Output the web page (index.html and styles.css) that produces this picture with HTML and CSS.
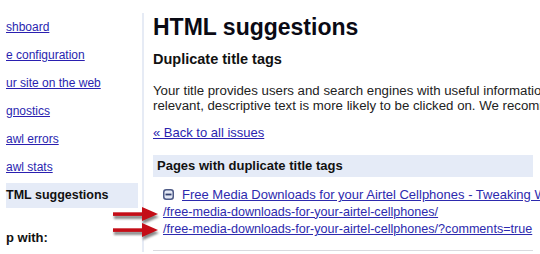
FILE: index.html
```html
<!DOCTYPE html>
<html>
<head>
<meta charset="utf-8">
<link rel="stylesheet" href="styles.css">
</head>
<body>
<div class="page">
  <aside class="sidebar">
    <ul class="nav">
      <li><a href="#">shboard</a></li>
      <li><a href="#">e configuration</a></li>
      <li><a href="#">ur site on the web</a></li>
      <li><a href="#">gnostics</a></li>
      <li><a href="#">awl errors</a></li>
      <li><a href="#">awl stats</a></li>
      <li class="active">TML suggestions</li>
    </ul>
    <div class="help">p with:</div>
  </aside>
  <main class="main">
    <h1 class="title">HTML suggestions</h1>
    <h2 class="subtitle">Duplicate title tags</h2>
    <p class="desc">Your title provides users and search engines with useful information about your site.<br>relevant, descriptive text is more likely to be clicked on. We recommend reviewing</p>
    <a class="back" href="#">« Back to all issues</a>
    <section class="dup">
      <div class="dup-head">Pages with duplicate title tags</div>
      <ul class="dup-list">
        <li class="dup-title">
          <svg class="toggle" width="11" height="11" viewBox="0 0 11 11"><rect x="0.75" y="0.75" width="9.5" height="9.5" rx="2.5" fill="#e4e9f5" stroke="#4d5a86" stroke-width="1.5"/><rect x="2.5" y="4.6" width="6" height="1.8" fill="#33406e"/></svg>
          <a href="#">Free Media Downloads for your Airtel Cellphones - Tweaking Windows</a>
        </li>
        <li class="dup-url"><a href="#">/free-media-downloads-for-your-airtel-cellphones/</a></li>
        <li class="dup-url"><a href="#">/free-media-downloads-for-your-airtel-cellphones/?comments=true</a></li>
      </ul>
    </section>
  </main>
  <svg class="arrow arrow-1" width="46" height="14" viewBox="0 0 46 14"><rect x="0" y="5.3" width="31" height="3.6" fill="#c40d17"/><polygon points="29,0 45,7 29,14" fill="#c40d17"/></svg>
  <svg class="arrow arrow-2" width="46" height="14" viewBox="0 0 46 14"><rect x="0" y="5.3" width="31" height="3.6" fill="#c40d17"/><polygon points="29,0 45,7 29,14" fill="#c40d17"/></svg>
</div>
</body>
</html>
```

FILE: styles.css
```css
html, body {
  margin: 0;
  padding: 0;
  background: #fff;
}
body {
  width: 540px;
  height: 254px;
  overflow: hidden;
  font-family: "Liberation Sans", Arial, sans-serif;
  color: #111;
}
.page {
  position: relative;
  display: flex;
  align-items: flex-start;
  width: 540px;
  height: 254px;
}
.sidebar {
  flex: 0 0 auto;
  box-sizing: border-box;
  width: 144px;
  height: 239px;
  margin-top: 13px;
  padding: 2px 4px 0 6px;
  border-right: 2px solid #e6ebf5;
}
.nav {
  list-style: none;
  margin: 0;
  padding: 0;
}
.nav li {
  height: 25px;
  line-height: 25px;
  margin-bottom: 3px;
  font-size: 12px;
  white-space: nowrap;
}
.nav a {
  color: #2a1fb0;
  text-decoration: underline;
}
.nav li.active {
  background: #e5ebf7;
  font-weight: bold;
  font-size: 12.5px;
  color: #111;
}
.help {
  margin-top: 20px;
  height: 20px;
  line-height: 20px;
  font-size: 13px;
  font-weight: bold;
  color: #111;
}
.main {
  flex: 0 0 auto;
  width: 380px;
  margin-left: 9px;
  white-space: nowrap;
}
.title {
  margin: 14px 0 0;
  font-size: 23px;
  line-height: 26px;
  font-weight: bold;
  color: #0a0a14;
}
.subtitle {
  margin: 10px 0 0;
  font-size: 14.5px;
  line-height: 18px;
  font-weight: bold;
  color: #111;
}
.desc {
  margin: 15px 0 0;
  font-size: 13.25px;
  line-height: 15px;
  color: #222;
}
.back {
  display: block;
  margin-top: 12px;
  font-size: 13px;
  line-height: 15px;
  color: #2a1fb0;
  text-decoration: underline;
}
.dup {
  margin-top: 15px;
  border-bottom: 1px solid #d9d9de;
}
.dup-head {
  height: 22px;
  line-height: 22px;
  padding-left: 4px;
  background: #e5ebf7;
  font-size: 13px;
  font-weight: bold;
  color: #111;
}
.dup-list {
  list-style: none;
  margin: 0;
  padding: 9px 0 11px 10px;
}
.dup-list li {
  height: 17.5px;
  line-height: 17.5px;
  font-size: 13px;
}
.dup-list li.dup-url {
  font-size: 12.6px;
}
.dup-list a {
  color: #2d2aae;
  text-decoration: underline;
}
.dup-title {
  display: flex;
  align-items: center;
  gap: 8px;
}
.toggle {
  flex: 0 0 auto;
}
.arrow {
  position: absolute;
  left: 113px;
  filter: drop-shadow(1px 3px 1.2px rgba(40, 40, 40, 0.55));
}
.arrow-1 {
  top: 207px;
}
.arrow-2 {
  top: 223px;
}
```
